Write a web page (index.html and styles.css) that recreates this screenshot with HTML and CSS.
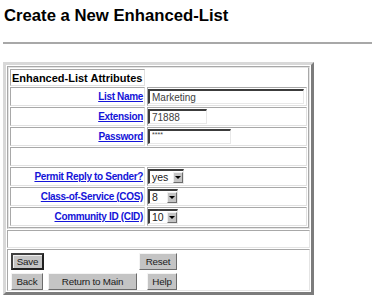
FILE: index.html
```html
<!DOCTYPE html>
<html>
<head>
<meta charset="utf-8">
<link rel="stylesheet" href="styles.css">
</head>
<body>
<div class="page">
  <h1 class="title">Create a New Enhanced-List</h1>
  <div class="rule"></div>
  <div class="panel">
    <div class="wrap">
      <div class="attrs">
        <div class="cell head">Enhanced-List Attributes</div>
        <div class="nocell"></div>

        <div class="cell label"><a href="#">List Name</a></div>
        <div class="cell field"><input class="text wide" type="text" value="Marketing"></div>

        <div class="cell label"><a href="#">Extension</a></div>
        <div class="cell field"><input class="text ext" type="text" value="71888"></div>

        <div class="cell label"><a href="#">Password</a></div>
        <div class="cell field"><input class="text pwd" type="text" value="****"></div>

        <div class="cell gapcell"></div>

        <div class="cell label"><a href="#">Permit Reply to Sender?</a></div>
        <div class="cell field"><span class="select s-yes"><span class="val">yes</span><span class="arrow"><span class="tri"></span></span></span></div>

        <div class="cell label"><a href="#">Class-of-Service (COS)</a></div>
        <div class="cell field"><span class="select s-num"><span class="val">8</span><span class="arrow"><span class="tri"></span></span></span></div>

        <div class="cell label"><a href="#">Community ID (CID)</a></div>
        <div class="cell field"><span class="select s-num"><span class="val">10</span><span class="arrow"><span class="tri"></span></span></span></div>
      </div>
    </div>
    <div class="wrap blank"></div>
    <div class="wrap btncell">
      <div class="btns">
        <button class="btn default save">Save</button>
        <span></span>
        <button class="btn reset">Reset</button>
        <button class="btn back">Back</button>
        <button class="btn main">Return to Main</button>
        <button class="btn help">Help</button>
      </div>
    </div>
  </div>
</div>
</body>
</html>
```

FILE: styles.css
```css
html, body {
  margin: 0;
  padding: 0;
  background: #ffffff;
}
body {
  font-family: "Liberation Sans", Arial, sans-serif;
  color: #000;
}
.page {
  padding: 0 0 0 3px;
}
.title {
  margin: 0;
  padding: 7px 0 0 1px;
  font-size: 16.7px;
  line-height: 18px;
  font-weight: bold;
}
.rule {
  margin-top: 17px;
  height: 2px;
  background: #a8a8a8;
}
.panel {
  margin-top: 18px;
  width: 311px;
  box-sizing: border-box;
  border: 3px solid;
  border-color: #d8d8d8 #7c7c7c #7c7c7c #d8d8d8;
  padding: 1px;
  display: flex;
  flex-direction: column;
  gap: 1px;
}
.wrap {
  border: 1px solid;
  border-color: #a8a8a8 #e4e4e4 #e4e4e4 #a8a8a8;
}
.attrs {
  border: 1px solid;
  border-color: #e4e4e4 #a8a8a8 #a8a8a8 #e4e4e4;
  padding: 1px;
  display: grid;
  grid-template-columns: 135px 1fr;
  grid-auto-rows: 19px;
  grid-template-rows: 17px;
  gap: 1px 2px;
}
.cell {
  border: 1px solid;
  border-color: #a8a8a8 #e0e0e0 #e0e0e0 #a8a8a8;
  box-sizing: border-box;
  display: flex;
  align-items: center;
}
.head {
  font-size: 11px;
  font-weight: bold;
  padding-left: 1px;
}
.label {
  justify-content: flex-end;
  padding-right: 1px;
  font-size: 10px;
  letter-spacing: -0.33px;
  font-weight: bold;
}
.label a {
  color: #1414d8;
  text-decoration: underline;
}
.field {
  padding-left: 0;
}
.gapcell {
  grid-column: 1 / span 2;
}
.text {
  box-sizing: border-box;
  height: 15px;
  margin: 0;
  padding: 0 0 0 2px;
  border-style: solid;
  border-width: 2px 1px 1px 2px;
  border-color: #3c3c3c #e8e8e8 #e8e8e8 #3c3c3c;
  font-family: "Liberation Sans", Arial, sans-serif;
  font-size: 10px;
  color: #404040;
  outline: none;
}
.wide { width: 156px; }
.ext { width: 59px; }
.pwd {
  width: 83px;
  font-size: 7px;
  padding-bottom: 5px;
}
.select {
  display: inline-flex;
  align-items: center;
  box-sizing: border-box;
  height: 15px;
  border-style: solid;
  border-width: 2px 1px 1px 2px;
  border-color: #3c3c3c #e8e8e8 #e8e8e8 #3c3c3c;
  font-size: 10.5px;
  color: #202020;
}
.s-yes { width: 36px; }
.s-num { width: 30px; }
.select .val {
  flex: 1;
  padding-left: 2px;
}
.arrow {
  width: 10px;
  height: 11px;
  background: #c4c4c4;
  border: 1px solid;
  border-color: #f0f0f0 #6c6c6c #6c6c6c #f0f0f0;
  box-sizing: border-box;
  display: flex;
  align-items: center;
  justify-content: center;
}
.tri {
  width: 0;
  height: 0;
  border-left: 3px solid transparent;
  border-right: 3px solid transparent;
  border-top: 3px solid #000;
}
.blank {
  height: 16px;
}
.btncell {
  height: 42px;
  box-sizing: border-box;
  padding: 3px 0 0 3px;
}
.btns {
  display: grid;
  grid-template-columns: 33px 91px 38px;
  grid-template-rows: 17px 17px;
  column-gap: 2px;
  row-gap: 3px;
}
.btn {
  margin: 0;
  padding: 0;
  height: 17px;
  box-sizing: border-box;
  background: #c4c4c4;
  border: 1px solid;
  border-color: #f4f4f4 #6c6c6c #6c6c6c #f4f4f4;
  font-family: "Liberation Sans", Arial, sans-serif;
  font-size: 9.8px;
  letter-spacing: -0.2px;
  color: #202020;
  line-height: 13px;
}
.default {
  border: 2px solid;
  border-color: #404040 #202020 #202020 #404040;
  box-shadow: inset 1px 1px 0 #f0f0f0;
}
.save { width: 33px; }
.reset { width: 38px; }
.back { width: 32px; }
.main { width: 89px; justify-self: end; }
.help { width: 30px; justify-self: end; }
```
